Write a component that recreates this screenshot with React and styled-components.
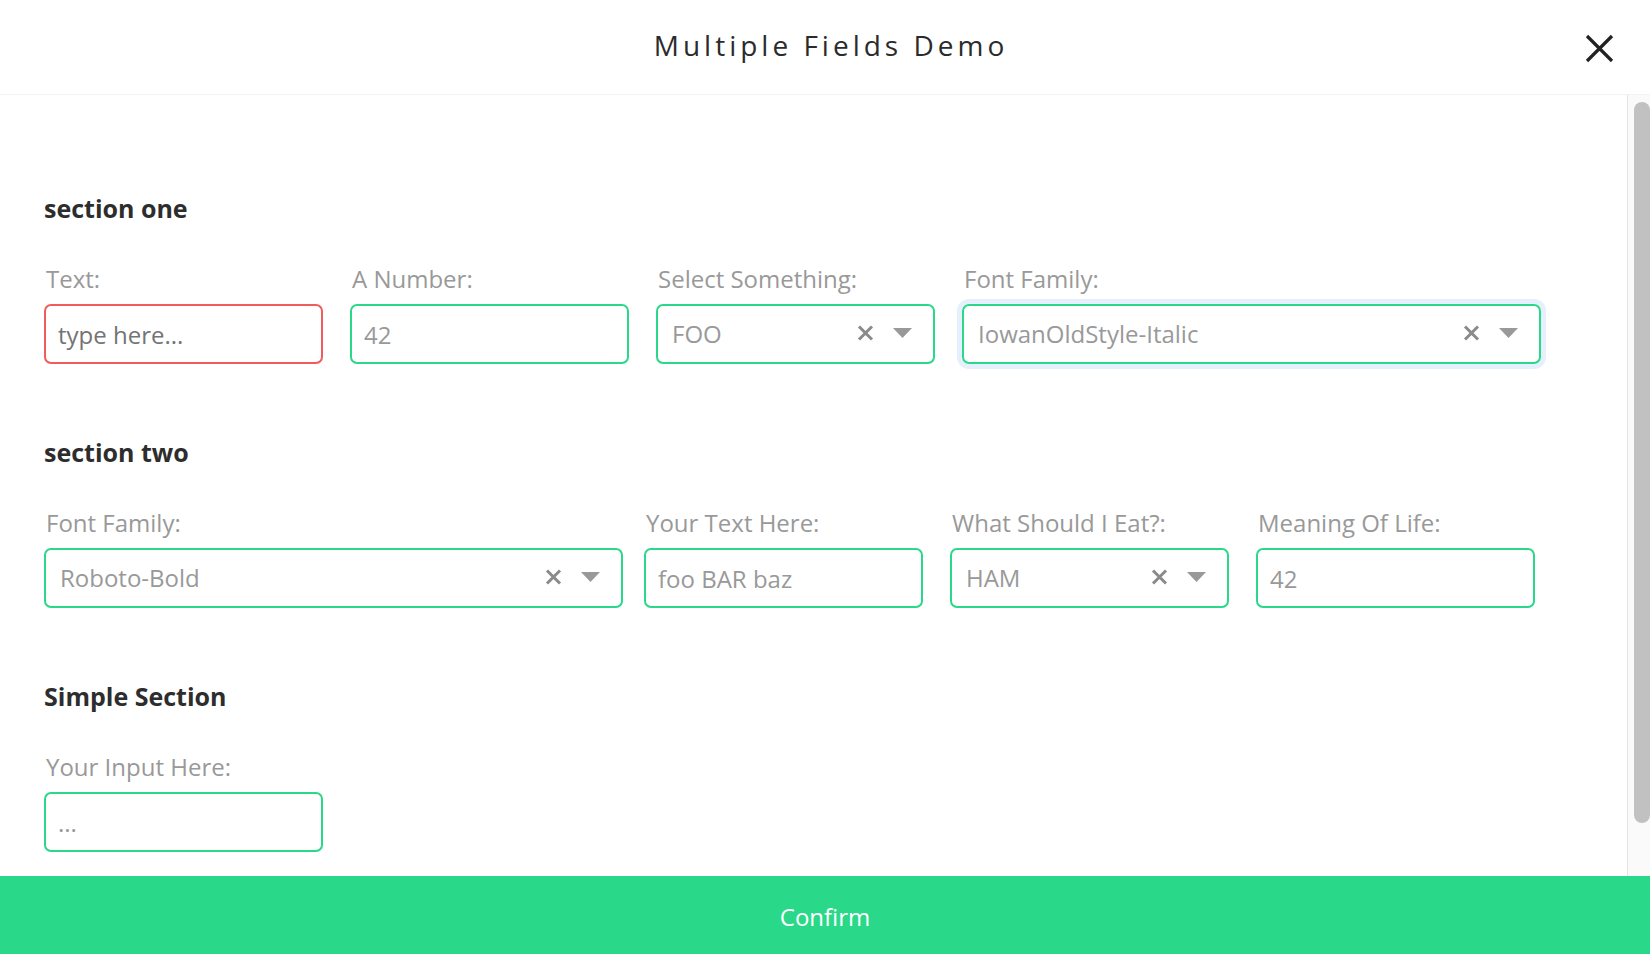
import React from 'react'
import styled, {createGlobalStyle} from 'styled-components'

const GlobalStyle = createGlobalStyle`
  html, body {
    margin: 0;
    padding: 0;
    background: #ffffff;
    font-family: "Open Sans", "Liberation Sans", sans-serif;
  }
  * { box-sizing: border-box; }
`

const GREEN = '#2ad889'

const sections = [
  {
    title: 'section one',
    fields: [
      {label: 'Text:', kind: 'input', value: 'type here...', invalid: true, dark: true},
      {label: 'A Number:', kind: 'input', value: '42'},
      {label: 'Select Something:', kind: 'select', value: 'FOO'},
      {label: 'Font Family:', kind: 'select', value: 'IowanOldStyle-Italic', width: 579, focused: true},
    ],
  },
  {
    title: 'section two',
    fields: [
      {label: 'Font Family:', kind: 'select', value: 'Roboto-Bold', width: 579, tight: true},
      {label: 'Your Text Here:', kind: 'input', value: 'foo BAR baz'},
      {label: 'What Should I Eat?:', kind: 'select', value: 'HAM'},
      {label: 'Meaning Of Life:', kind: 'input', value: '42'},
    ],
  },
  {
    title: 'Simple Section',
    fields: [
      {label: 'Your Input Here:', kind: 'input', value: '...'},
    ],
  },
]

const CloseIcon = () => (
  <svg width="29" height="29" viewBox="0 0 29 29">
    <path d="M2 2 L27 27 M27 2 L2 27" stroke="#222" strokeWidth="3.2" fill="none" />
  </svg>
)

const ClearIcon = () => (
  <svg width="17" height="16" viewBox="0 0 17 16">
    <path d="M2 1.5 L15 14.5 M15 1.5 L2 14.5" stroke="#8a8a8a" strokeWidth="3" fill="none" />
  </svg>
)

const CaretIcon = () => (
  <svg width="19" height="10" viewBox="0 0 19 10">
    <polygon points="0,0 19,0 9.5,10" fill="#999" />
  </svg>
)

const FieldControl = ({field}) => {
  if (field.kind === 'select') {
    return (
      <SelectBox $focused={field.focused}>
        <SelectValue>{field.value}</SelectValue>
        <SelectIcons>
          <ClearIcon/>
          <CaretIcon/>
        </SelectIcons>
      </SelectBox>
    )
  }
  return (
    <InputBox $invalid={field.invalid} $dark={field.dark}>{field.value}</InputBox>
  )
}

const App = () => {
  return (
    <Page>
      <GlobalStyle/>
      <Header>
        <span/>
        <Title>Multiple Fields Demo</Title>
        <CloseButton><CloseIcon/></CloseButton>
      </Header>
      <Body>
        <Content>
          {sections.map((s) => (
            <Section key={s.title}>
              <SectionTitle>{s.title}</SectionTitle>
              <Row>
                {s.fields.map((f, i) => (
                  <Field key={i} $width={f.width} $tight={f.tight}>
                    <Label>{f.label}</Label>
                    <FieldControl field={f}/>
                  </Field>
                ))}
              </Row>
            </Section>
          ))}
        </Content>
        <ScrollTrack>
          <ScrollThumb/>
        </ScrollTrack>
      </Body>
      <ConfirmButton>Confirm</ConfirmButton>
    </Page>
  )
}

export default App

const Page = styled.div`
  height: 100vh;
  width: 100vw;
  display: flex;
  flex-direction: column;
  overflow: hidden;
`

const Header = styled.div`
  height: 95px;
  flex-shrink: 0;
  display: grid;
  grid-template-columns: 1fr auto 1fr;
  align-items: center;
  border-bottom: 1px solid #f2f2f2;
`

const Title = styled.h1`
  margin: 0 0 4px 12px;
  font-size: 28px;
  font-weight: 400;
  letter-spacing: 4px;
  color: #2b2b2b;
`

const CloseButton = styled.div`
  justify-self: end;
  display: flex;
  margin-right: 36px;
  margin-top: 2px;
`

const Body = styled.div`
  flex: 1;
  min-height: 0;
  display: flex;
`

const Content = styled.div`
  flex: 1;
  overflow: hidden;
  padding: 95px 0 0 44px;
`

const ScrollTrack = styled.div`
  width: 23px;
  flex-shrink: 0;
  border-left: 1px solid #e4e4e4;
  background: #fafafa;
  padding: 7px 0 0 6px;
`

const ScrollThumb = styled.div`
  width: 16px;
  height: 721px;
  border-radius: 8px;
  background: #c1c1c1;
`

const Section = styled.div`
  margin-bottom: 70px;
`

const SectionTitle = styled.h2`
  margin: 0 0 37px;
  font-size: 25px;
  line-height: 36px;
  font-weight: 700;
  color: #2d2d2d;
`

const Row = styled.div`
  display: flex;
  gap: 27px;
`

const Field = styled.div`
  width: ${(p) => (p.$width || 279)}px;
  margin-right: ${(p) => (p.$tight ? '-6px' : '0')};
  display: flex;
  flex-direction: column;
  gap: 9px;
`

const Label = styled.label`
  font-size: 24px;
  line-height: 32px;
  color: #999;
  padding-left: 2px;
`

const InputBox = styled.div`
  height: 60px;
  display: flex;
  align-items: center;
  padding: 0 12px;
  border: 2px solid ${(p) => (p.$invalid ? '#f25b5b' : GREEN)};
  border-radius: 7px;
  font-size: 24px;
  color: ${(p) => (p.$dark ? '#747474' : '#999')};
  white-space: nowrap;
`

const SelectBox = styled.div`
  height: 60px;
  display: flex;
  align-items: center;
  padding: 0 21px 2px 14px;
  border: 2px solid ${GREEN};
  border-radius: 7px;
  box-shadow: ${(p) => (p.$focused ? '0 0 0 5px #e5f0fc' : 'none')};
`

const SelectValue = styled.div`
  flex: 1;
  font-size: 24px;
  color: #999;
  white-space: nowrap;
  overflow: hidden;
`

const SelectIcons = styled.div`
  display: flex;
  align-items: center;
  gap: 19px;
`

const ConfirmButton = styled.button`
  height: 78px;
  flex-shrink: 0;
  border: none;
  background: ${GREEN};
  color: #ffffff;
  font-family: "Open Sans", "Liberation Sans", sans-serif;
  font-size: 24px;
  padding: 2px 0 0;
  cursor: pointer;
`
